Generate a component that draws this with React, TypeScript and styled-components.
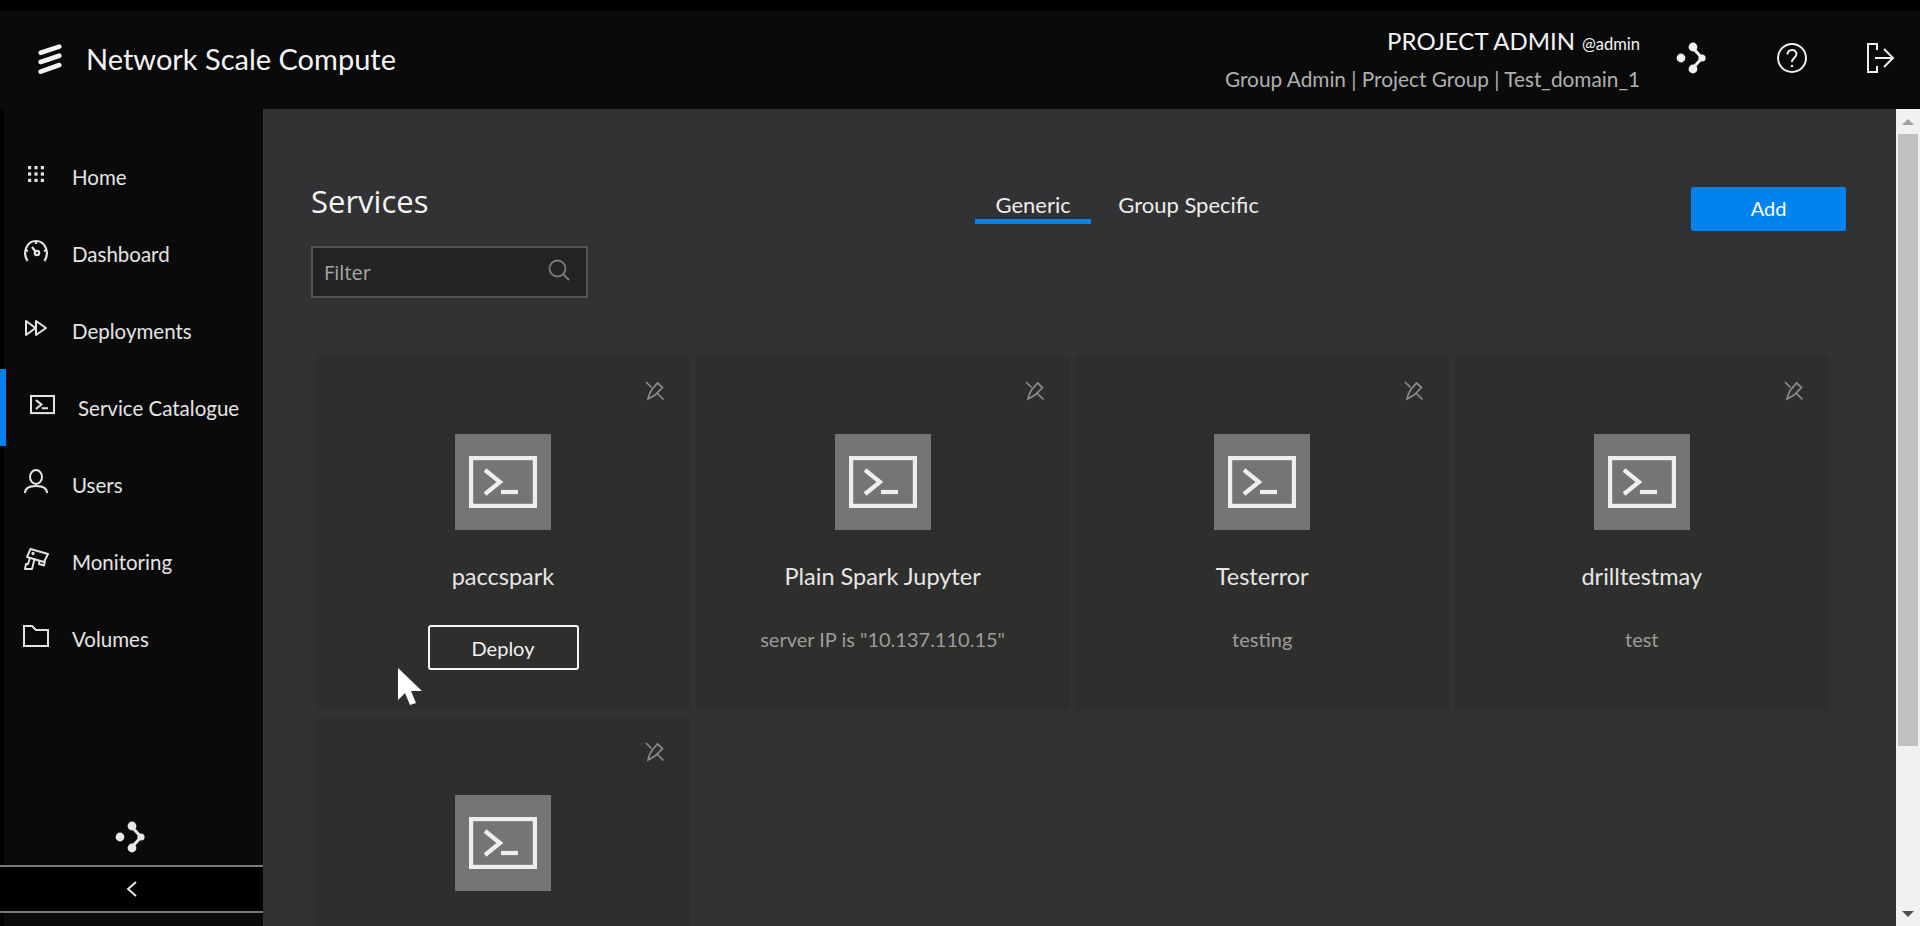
import React from "react"
import styled, { createGlobalStyle } from "styled-components"

const GlobalStyle = createGlobalStyle`
    html, body {
        margin: 0;
        padding: 0;
        height: 100%;
        overflow: hidden;
        background: #000;
    }
    * {
        box-sizing: border-box;
    }
`

const Page = styled.div`
    height: 926px;
    padding-top: 11px;
    display: flex;
    flex-direction: column;
    font-family: Lato, "Open Sans", sans-serif;
    color: #f2f2f2;
    background: #000;
    overflow: hidden;
    position: relative;
`

const TopBar = styled.header`
    height: 98px;
    flex: none;
    display: flex;
    align-items: center;
    background: #0a0a0b;
    padding: 0 25px 0 38px;
`

const Brand = styled.div`
    display: flex;
    align-items: center;
    gap: 24px;
    font-size: 29px;
    flex: 1;
    color: #f4f4f4;
    padding-bottom: 3px;

    svg {
        margin-top: 3px;
    }
`

const UserBlock = styled.div`
    display: flex;
    flex-direction: column;
    align-items: flex-end;
    gap: 9px;
    margin: -2px 34.5px 0 0;
`

const UserName = styled.div`
    font-size: 24px;
    line-height: 28px;
    color: #f4f4f4;

    small {
        font-size: 16.5px;
        margin-left: 7px;
    }
`

const UserScope = styled.div`
    font-size: 20.8px;
    line-height: 24px;
    color: #b0b0b0;
`

const HeaderIcons = styled.div`
    display: flex;
    align-items: center;
    gap: 57px;
    color: #f0f0f0;
    margin-top: -4px;

    svg:nth-child(2) {
        margin-left: 12.5px;
    }
`

const Body = styled.div`
    flex: 1;
    min-height: 0;
    display: flex;
`

const Sidebar = styled.aside`
    width: 263px;
    flex: none;
    display: flex;
    flex-direction: column;
    background: #0a0a0b;
    border-left: 4px solid #000;
`

const Nav = styled.nav`
    flex: 1;
    padding-top: 29px;
`

const NavItem = styled.div<{ $active?: boolean }>`
    height: 77px;
    display: flex;
    align-items: center;
    gap: 18px;
    padding-left: ${(p) => (p.$active ? "18px" : "14px")};
    margin-left: -4px;
    border-left: ${(p) => (p.$active ? "6px solid #0082f0" : "4px solid transparent")};
    font-size: 20.5px;
    color: #e4e4e4;
`

const NavIcon = styled.span`
    width: 36px;
    flex: none;
    display: flex;
    justify-content: center;
    margin-top: -5px;
`

const SideShare = styled.div`
    height: 54px;
    display: flex;
    justify-content: center;
    align-items: center;
    color: #e8e8e8;
    padding: 0 8px 2px 0;
`

const Collapse = styled.div`
    height: 48px;
    margin-left: -4px;
    display: flex;
    justify-content: center;
    align-items: center;
    background: #000;
    border-top: 2px solid #7a7a7a;
    border-bottom: 2px solid #7a7a7a;
    margin-bottom: 13px;
`

const Main = styled.main`
    flex: 1;
    min-width: 0;
    background: #323234;
    padding: 78px 50px 0 48px;
    overflow: hidden;
`

const ToolRow = styled.div`
    display: flex;
    height: 44px;
`

const Title = styled.h1`
    margin: -6px 0 0;
    width: 664px;
    font-family: "Open Sans", sans-serif;
    font-size: 31px;
    line-height: 40px;
    font-weight: 400;
    color: #f4f4f4;
`

const Tabs = styled.div`
    display: flex;
    gap: 27px;
    flex: 1;
`

const Tab = styled.div<{ $active?: boolean }>`
    height: 37px;
    padding: 0 ${(p) => (p.$active ? "20.5px" : "0")};
    font-size: 22px;
    line-height: 36px;
    color: #ececec;
    border-bottom: 5px solid ${(p) => (p.$active ? "#0082f0" : "transparent")};
`

const AddButton = styled.button`
    width: 155px;
    height: 44px;
    border: 0;
    border-radius: 2px;
    background: #0082f0;
    color: #fff;
    font-family: inherit;
    font-size: 20px;
    padding: 0 0 2px;
`

const FilterBox = styled.div`
    width: 277px;
    height: 52px;
    margin-top: 15px;
    display: flex;
    align-items: center;
    justify-content: space-between;
    padding: 0 15px 0 11px;
    background: #232324;
    border: 2px solid #55554f;
    font-family: "Open Sans", sans-serif;
    font-size: 20px;
    color: #a8a8a8;

    svg {
        margin-top: -4px;
    }
`

const CardGrid = styled.div`
    margin: 58px 0 0 5px;
    display: grid;
    grid-template-columns: repeat(4, 374px);
    grid-auto-rows: 354px;
    column-gap: 5.6px;
    row-gap: 7px;
`

const Card = styled.div`
    background: #2e2e2d;
    position: relative;
    display: flex;
    flex-direction: column;
    align-items: center;
    padding-top: 78px;
`

const PinButton = styled.div`
    position: absolute;
    top: 25px;
    right: 25px;
    color: #8a8a8a;
    line-height: 0;
`

const IconTile = styled.div`
    width: 96px;
    height: 96px;
    background: #757575;
    display: flex;
    align-items: center;
    justify-content: center;
    color: #eeeeee;
`

const CardName = styled.div`
    margin-top: 32px;
    font-size: 23.5px;
    line-height: 28px;
    color: #e6e6e6;
`

const CardDescription = styled.div`
    margin-top: 37px;
    font-size: 20px;
    line-height: 24px;
    color: #9c9c9c;
`

const DeployButton = styled.button`
    width: 151px;
    height: 45px;
    margin-top: 35px;
    background: transparent;
    border: 2px solid #f4f4f4;
    border-radius: 3px;
    color: #f2f2f2;
    font-family: inherit;
    font-size: 20px;
`

const Cursor = styled.svg`
    position: absolute;
    left: 397px;
    top: 667px;
`

const ScrollTrack = styled.div`
    width: 24px;
    flex: none;
    display: flex;
    flex-direction: column;
    align-items: center;
    background: #f1f1f1;
    padding: 0 2px;
`

const ScrollArrow = styled.div<{ $down?: boolean }>`
    height: 25px;
    flex: none;
    display: flex;
    align-items: center;
    justify-content: center;

    &::before {
        content: "";
        border-left: 6px solid transparent;
        border-right: 6px solid transparent;
        border-${(p) => (p.$down ? "top" : "bottom")}: 6px solid ${(p) => (p.$down ? "#505050" : "#a3a3a3")};
    }
`

const ScrollThumb = styled.div`
    width: 100%;
    height: 612px;
    flex: none;
    background: #c1c1c1;
`

const ScrollGap = styled.div`
    flex: 1;
`

const EricssonLogo = () => (
    <svg width="24" height="32" viewBox="0 0 24 32" fill="none" stroke="currentColor" strokeWidth="4.6" strokeLinecap="round">
        <path d="M2.7 8.7 L21.3 2.6" />
        <path d="M2.7 18 L21.3 11.7" />
        <path d="M2.7 27.7 L21.3 21" />
    </svg>
)

const ShareIcon = () => (
    <svg width="32" height="32" viewBox="0 0 32 32" fill="currentColor">
        <path d="M18 6 L27 16 L18 26" fill="none" stroke="currentColor" strokeWidth="3" />
        <circle cx="6" cy="16" r="4.4" />
        <circle cx="18" cy="5" r="4.4" />
        <circle cx="27" cy="16" r="3.6" />
        <circle cx="18" cy="27" r="4.4" />
    </svg>
)

const HelpIcon = () => (
    <svg width="32" height="32" viewBox="0 0 32 32" fill="none" stroke="currentColor" strokeWidth="2">
        <circle cx="16" cy="16" r="14" />
        <path d="M11.5 12.5 C11.5 6.5 20.5 6.5 20.5 12 C20.5 15.5 16 16 16 20" />
        <circle cx="16" cy="24" r="1.2" fill="currentColor" stroke="none" />
    </svg>
)

const LogoutIcon = () => (
    <svg width="30" height="32" viewBox="0 0 30 32" fill="none" stroke="currentColor" strokeWidth="2">
        <path d="M12 8 V2 H3 V30 H12 V24" />
        <path d="M10 16 H27 M19 7 L28 16 L19 25" />
    </svg>
)

const GridIcon = () => (
    <svg width="24" height="24" viewBox="0 0 24 24" fill="currentColor">
        {[4, 10.4, 16.8].flatMap((y) =>
            [4, 10.4, 16.8].map((x) => <rect key={`${x}-${y}`} x={x} y={y} width="3.2" height="3.2" />)
        )}
    </svg>
)

const GaugeIcon = () => (
    <svg width="26" height="24" viewBox="0 0 26 24" fill="none" stroke="currentColor" strokeWidth="2.2">
        <path d="M4.5 22 C-1 13 4 2 13 2 C22 2 27 13 21.5 22" />
        <path d="M2 11 L5 12 M24 11 L21 12 M13 2 V5" />
        <circle cx="14" cy="14" r="2.2" />
        <path d="M12.5 12.5 L9 8" />
    </svg>
)

const ForwardIcon = () => (
    <svg width="24" height="24" viewBox="0 0 24 24" fill="none" stroke="currentColor" strokeWidth="2" strokeLinejoin="round">
        <path d="M2 5 L11.5 12 L2 19 Z" />
        <path d="M12 5 L22 12 L12 19 Z" />
    </svg>
)

const TerminalIcon = ({ width, weight }: { width: number; weight: number }) => (
    <svg width={width} height={(width * 52) / 68} viewBox="0 0 68 52" fill="none" stroke="currentColor" strokeWidth={weight}>
        <rect x={weight / 2} y={weight / 2} width={68 - weight} height={52 - weight} />
        <path d="M16 14 L31 26 L16 38" />
        <path d="M32 36 H49" />
    </svg>
)

const UserIcon = () => (
    <svg width="24" height="26" viewBox="0 0 24 26" fill="none" stroke="currentColor" strokeWidth="2">
        <ellipse cx="12" cy="8" rx="6" ry="7" />
        <path d="M1 24 C1 18 7 17 12 17 C17 17 23 18 23 24" />
    </svg>
)

const CameraIcon = () => (
    <svg width="25" height="23" viewBox="0 0 25 23" fill="none" stroke="currentColor" strokeWidth="1.9" strokeLinejoin="round">
        <path d="M6.5 1 L24 6 L20 14 L3 9 Z" />
        <path d="M6 10 L4 16 H2 L1 21 H8 L10.5 11" />
        <path d="M15.5 13 L15 16 L20 17.5 L21 13" />
        <circle cx="9" cy="5.5" r="0.7" />
    </svg>
)

const FolderIcon = () => (
    <svg width="26" height="24" viewBox="0 0 26 24" fill="none" stroke="currentColor" strokeWidth="2">
        <path d="M1 2 H9 L13 6 H25 V22 H1 Z" />
    </svg>
)

const PinOffIcon = () => (
    <svg width="20" height="20" viewBox="0 0 20 20" fill="none" stroke="currentColor" strokeWidth="1.7">
        <path d="M1 1 L6.5 6.5 M12 12 L18.5 18.5" />
        <path d="M12.5 2 L17.5 6.5 L10 14 Q6 16.5 3 18 Q4 13 6.5 9 Z" />
    </svg>
)

const SearchIcon = () => (
    <svg width="24" height="24" viewBox="0 0 24 24" fill="none" stroke="#7c7c7c" strokeWidth="1.8">
        <circle cx="10.5" cy="10.5" r="8" />
        <path d="M16.5 16.5 L22 22" />
    </svg>
)

const navItems = [
    { label: "Home", icon: <GridIcon /> },
    { label: "Dashboard", icon: <GaugeIcon /> },
    { label: "Deployments", icon: <ForwardIcon /> },
    { label: "Service Catalogue", icon: <TerminalIcon width={25} weight={5.5} />, active: true },
    { label: "Users", icon: <UserIcon /> },
    { label: "Monitoring", icon: <CameraIcon /> },
    { label: "Volumes", icon: <FolderIcon /> },
]

const services = [
    { name: "paccspark", deploy: true },
    { name: "Plain Spark Jupyter", description: 'server IP is "10.137.110.15"' },
    { name: "Testerror", description: "testing" },
    { name: "drilltestmay", description: "test" },
    {},
]

const App = () => {
    return (
        <>
            <GlobalStyle />
            <Page>
                <TopBar>
                    <Brand>
                        <EricssonLogo />
                        Network Scale Compute
                    </Brand>
                    <UserBlock>
                        <UserName>
                            PROJECT ADMIN<small>@admin</small>
                        </UserName>
                        <UserScope>Group Admin | Project Group | Test_domain_1</UserScope>
                    </UserBlock>
                    <HeaderIcons>
                        <ShareIcon />
                        <HelpIcon />
                        <LogoutIcon />
                    </HeaderIcons>
                </TopBar>
                <Body>
                    <Sidebar>
                        <Nav>
                            {navItems.map((item) => (
                                <NavItem key={item.label} $active={item.active}>
                                    <NavIcon>{item.icon}</NavIcon>
                                    {item.label}
                                </NavItem>
                            ))}
                        </Nav>
                        <SideShare>
                            <ShareIcon />
                        </SideShare>
                        <Collapse>
                            <svg width="12" height="18" viewBox="0 0 12 18" fill="none" stroke="#f0f0f0" strokeWidth="1.8">
                                <path d="M10 2 L2 9 L10 16" />
                            </svg>
                        </Collapse>
                    </Sidebar>
                    <Main>
                        <ToolRow>
                            <Title>Services</Title>
                            <Tabs>
                                <Tab $active>Generic</Tab>
                                <Tab>Group Specific</Tab>
                            </Tabs>
                            <AddButton>Add</AddButton>
                        </ToolRow>
                        <FilterBox>
                            Filter
                            <SearchIcon />
                        </FilterBox>
                        <CardGrid>
                            {services.map((service, index) => (
                                <Card key={index}>
                                    <PinButton>
                                        <PinOffIcon />
                                    </PinButton>
                                    <IconTile>
                                        <TerminalIcon width={68} weight={4.2} />
                                    </IconTile>
                                    {service.name && <CardName>{service.name}</CardName>}
                                    {service.description && <CardDescription>{service.description}</CardDescription>}
                                    {service.deploy && <DeployButton>Deploy</DeployButton>}
                                </Card>
                            ))}
                        </CardGrid>
                    </Main>
                    <ScrollTrack>
                        <ScrollArrow />
                        <ScrollThumb />
                        <ScrollGap />
                        <ScrollArrow $down />
                    </ScrollTrack>
                </Body>
                <Cursor width="28" height="40" viewBox="0 0 28 40">
                    <path d="M1 1 V33 L8 26 L13 38 L19 36 L14 24 H25 Z" fill="#fff" />
                </Cursor>
            </Page>
        </>
    )
}

export default App
